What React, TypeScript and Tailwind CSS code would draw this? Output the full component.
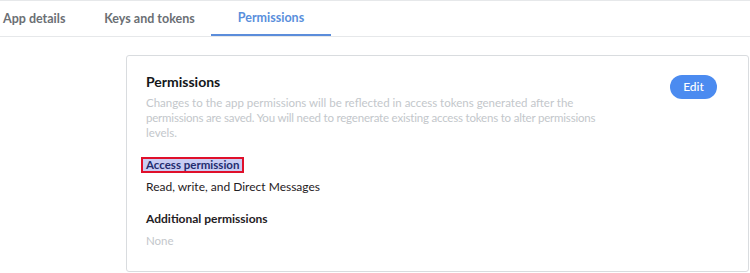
export default function App() {
  const tabs = [
    { label: 'App details', active: false },
    { label: 'Keys and tokens', active: false },
    { label: 'Permissions', active: true },
  ]

  return (
    <div className="h-[273px] w-[750px] overflow-hidden bg-white font-['Lato',sans-serif] text-[#1f2124]">
      <nav className="flex h-[37px] border-y border-[#e6e8ea]">
        {tabs.map((tab, i) => (
          <div
            key={tab.label}
            className={
              tab.active
                ? 'flex w-[120px] items-center justify-center border-b-2 border-[#5b8ddb] pt-[2px] text-[12.5px] font-bold text-[#5a8fdc]'
                : i === 0
                  ? 'flex w-[88px] items-center pl-[3px] pt-[2px] text-[12.5px] font-bold text-[#6b6f74]'
                  : 'flex w-[123px] items-center justify-center pt-[2px] text-[12.5px] font-bold text-[#6b6f74]'
            }
          >
            {tab.label}
          </div>
        ))}
      </nav>

      <div className="flex pl-[126px] pt-[18px]">
        <section className="flex h-[217px] w-[623px] justify-between rounded-[3px] border border-[#d9dcdf] pl-[19px] pr-[31px] pt-[17px]">
          <div className="flex flex-col">
            <h2 className="text-[14px] font-bold leading-[18px] text-[#14171a]">Permissions</h2>
            <p className="mt-[4px] whitespace-nowrap text-[11.5px] leading-[15px] text-[#c3c7cb]">
              Changes to the app permissions will be reflected in access tokens generated after the
              <br />
              <span className="tracking-[-0.2px]">
                permissions are saved. You will need to regenerate existing access tokens to alter permissions
              </span>
              <br />
              levels.
            </p>

            <div className="mt-[17px] flex">
              <span className="-ml-[5px] border-2 border-[#e0102b] bg-[#c8cdf3] px-[3px] text-[11.5px] font-bold leading-[12px] text-[#232c6e]">
                Access permission
              </span>
            </div>
            <p className="mt-[6px] text-[12px] leading-[16px] text-[#1f2124]">Read, write, and Direct Messages</p>

            <h3 className="mt-[16px] text-[12px] font-bold leading-[16px] text-[#1f2124]">Additional permissions</h3>
            <p className="mt-[6px] text-[11.5px] leading-[16px] text-[#c3c7cb]">None</p>
          </div>

          <button
            type="button"
            className="mt-[2px] h-[24px] w-[47px] shrink-0 rounded-full bg-[#4b8bf0] text-[12px] font-medium text-white"
          >
            Edit
          </button>
        </section>
      </div>
    </div>
  )
}
